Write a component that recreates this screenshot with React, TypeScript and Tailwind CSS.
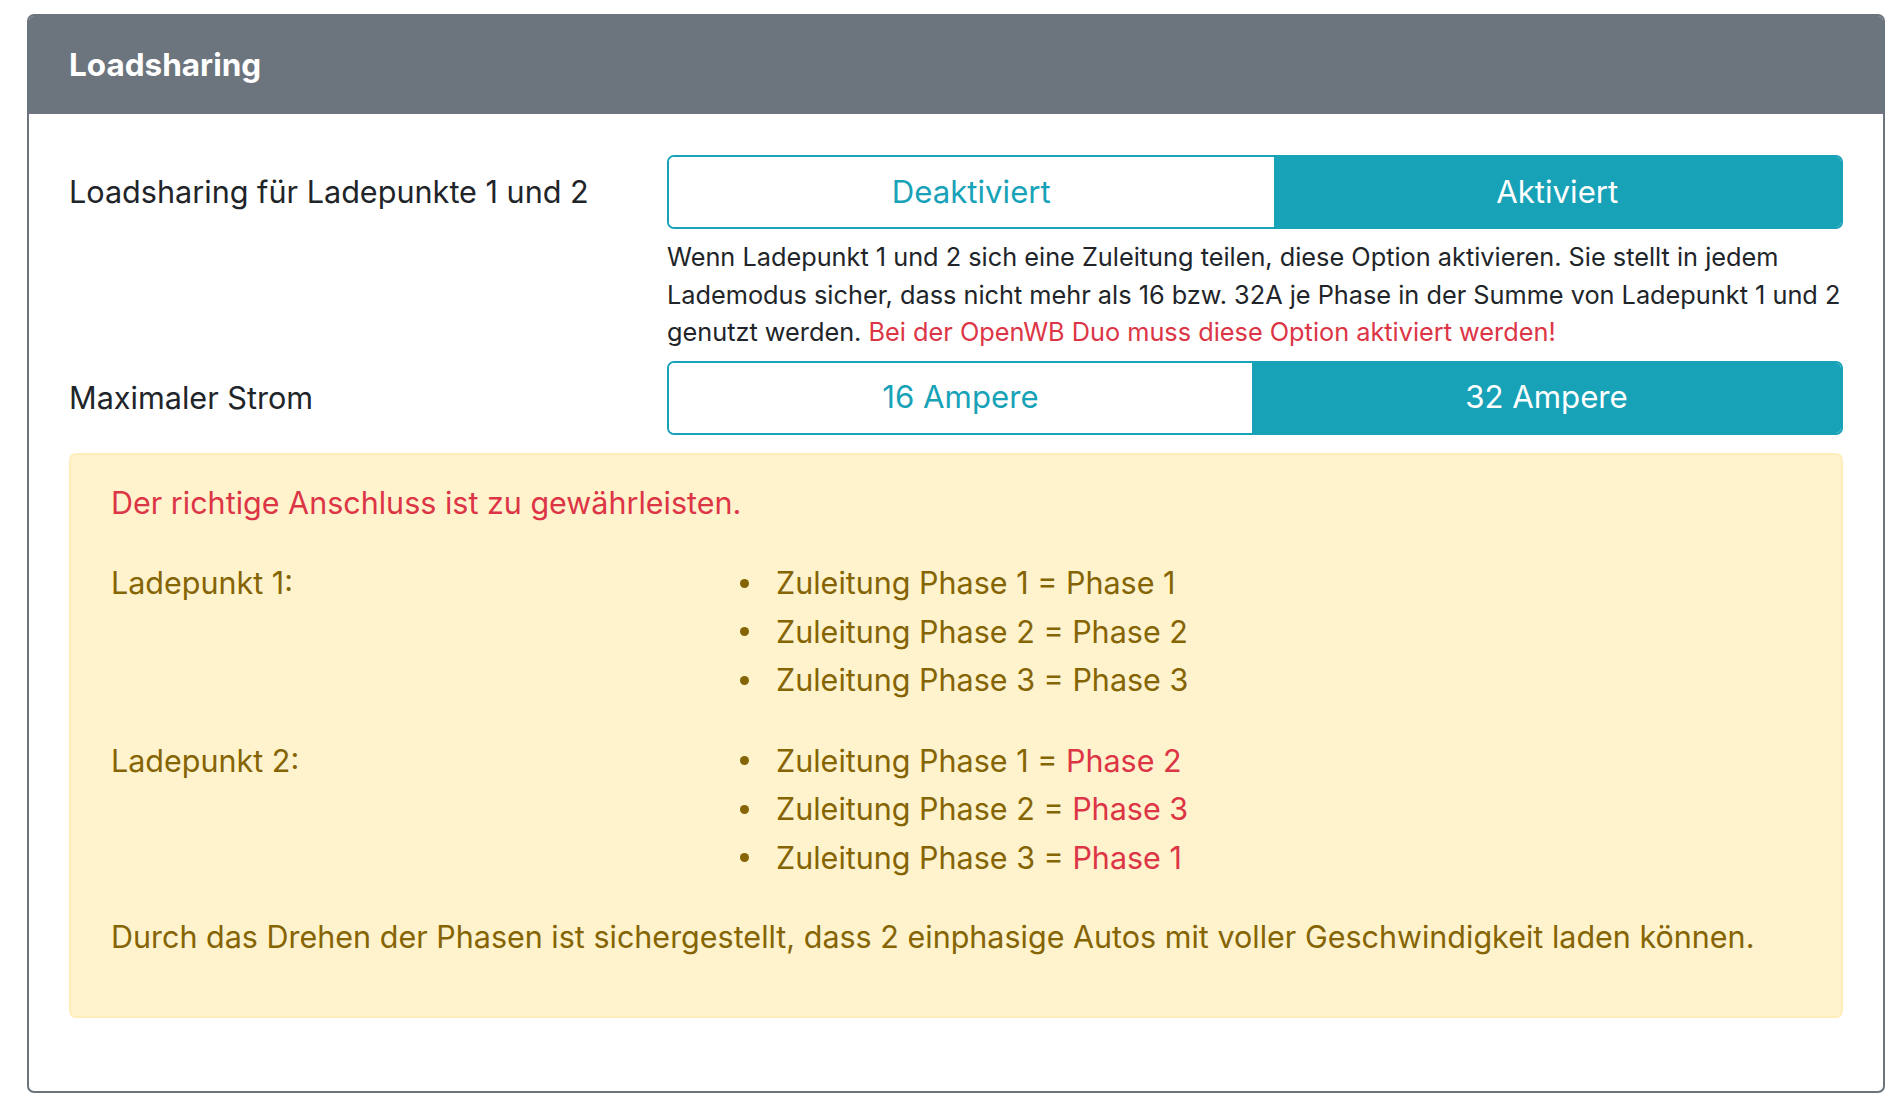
import React from "react";

const font = { fontFamily: "Inter, 'Noto Sans', sans-serif" };

function Toggle({ options, active }: { options: string[]; active: number }) {
  return (
    <div className="flex h-[74px] w-full rounded-[7px] border-2 border-[#17a2b8] overflow-hidden">
      {options.map((o, i) => (
        <div
          key={o}
          className={`flex-auto flex items-center justify-center px-[30px] text-[31.2px] ${
            i === active ? "bg-[#17a2b8] text-white" : "bg-white text-[#17a2b8]"
          }`}
        >
          {o}
        </div>
      ))}
    </div>
  );
}

function Bullets({ items }: { items: [string, string, boolean][] }) {
  return (
    <div className="flex flex-col">
      {items.map(([a, b, red]) => (
        <div key={a} className="flex items-center h-[48.5px]">
          <span className="w-[9px] h-[9px] rounded-full bg-[#856404] mr-[27px]" />
          <span>
            {a} = <span className={red ? "text-[#dc3545]" : ""}>{b}</span>
          </span>
        </div>
      ))}
    </div>
  );
}

export default function App() {
  return (
    <div className="min-h-screen bg-white pt-[14px] pl-[27px] pr-[13px] text-[#212529]" style={font}>
      <div className="rounded-[7px] border-2 border-[#6c757d] overflow-hidden h-[1079px]">
        {/* Header */}
        <div className="h-[98px] bg-[#6c757d] flex items-center px-[40px]">
          <h2 className="text-white text-[31.5px] font-bold">Loadsharing</h2>
        </div>

        {/* Body */}
        <div className="px-[40px] pt-[41px]">
          <div className="grid grid-cols-[598px_1fr]">
            <div className="flex items-center h-[74px] text-[30.6px]">Loadsharing für Ladepunkte 1 und 2</div>
            <div>
              <Toggle options={["Deaktiviert", "Aktiviert"]} active={1} />
              <p className="mt-[9px] text-[25.3px] leading-[37.5px] whitespace-nowrap">
                Wenn Ladepunkt 1 und 2 sich eine Zuleitung teilen, diese Option aktivieren. Sie stellt in jedem
                <br />
                Lademodus sicher, dass nicht mehr als 16 bzw. 32A je Phase in der Summe von Ladepunkt 1 und 2
                <br />
                genutzt werden.{" "}
                <span className="text-[#dc3545]">Bei der OpenWB Duo muss diese Option aktiviert werden!</span>
              </p>
            </div>
          </div>

          <div className="grid grid-cols-[598px_1fr] mt-[10px]">
            <div className="flex items-center h-[74px] text-[30.6px]">Maximaler Strom</div>
            <Toggle options={["16 Ampere", "32 Ampere"]} active={1} />
          </div>

          {/* Alert */}
          <div className="mt-[18px] rounded-[7px] border-2 border-[#ffeeba] bg-[#fff3cd] text-[#856404] text-[30.5px] leading-[48.5px] pl-[40px] pr-[40px] pt-[24px] pb-[54px]">
            <p className="text-[#dc3545]">Der richtige Anschluss ist zu gewährleisten.</p>
            <div className="grid grid-cols-[629px_1fr] mt-[32px]">
              <div>Ladepunkt 1:</div>
              <Bullets
                items={[
                  ["Zuleitung Phase 1", "Phase 1", false],
                  ["Zuleitung Phase 2", "Phase 2", false],
                  ["Zuleitung Phase 3", "Phase 3", false],
                ]}
              />
            </div>
            <div className="grid grid-cols-[629px_1fr] mt-[32px]">
              <div>Ladepunkt 2:</div>
              <Bullets
                items={[
                  ["Zuleitung Phase 1", "Phase 2", true],
                  ["Zuleitung Phase 2", "Phase 3", true],
                  ["Zuleitung Phase 3", "Phase 1", true],
                ]}
              />
            </div>
            <p className="mt-[31px]">
              Durch das Drehen der Phasen ist sichergestellt, dass 2 einphasige Autos mit voller Geschwindigkeit laden können.
            </p>
          </div>
        </div>
      </div>
    </div>
  );
}
